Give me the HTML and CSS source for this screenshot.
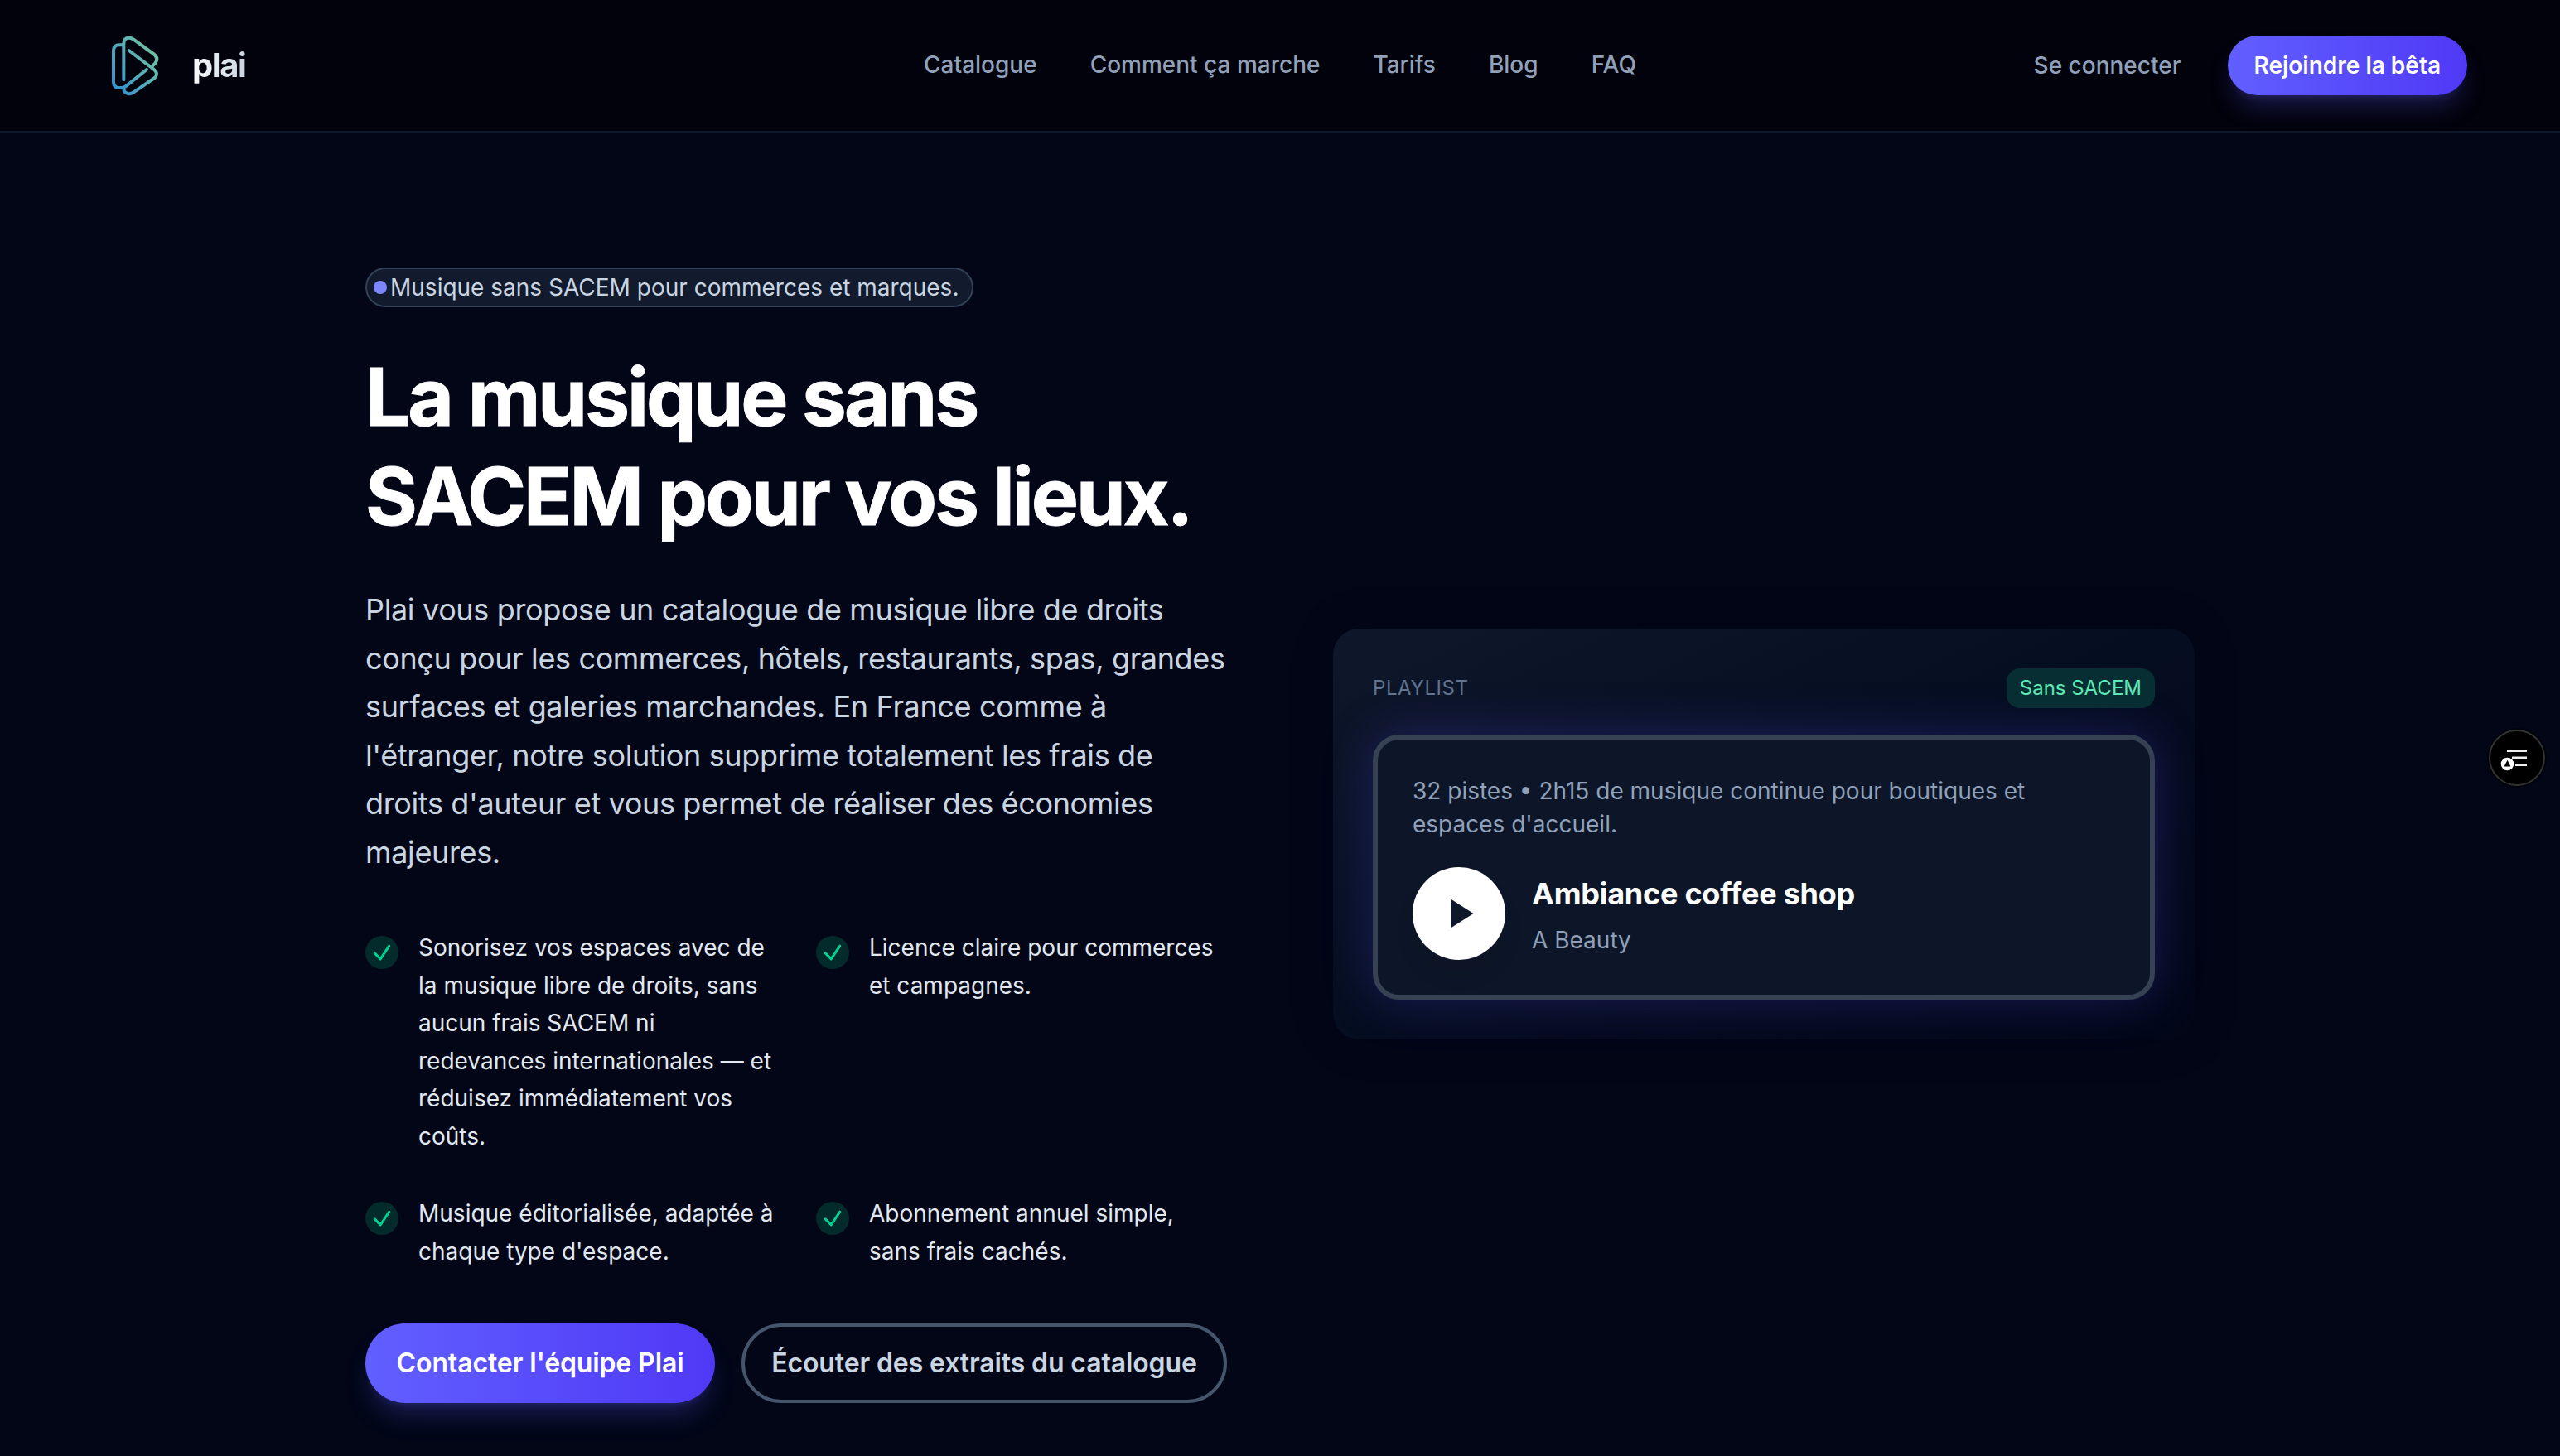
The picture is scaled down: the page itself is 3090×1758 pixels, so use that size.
FILE: index.html
```html
<!DOCTYPE html>
<html lang="fr">
<head>
  <meta charset="UTF-8">
  <meta name="viewport" content="width=device-width, initial-scale=1.0">
  <title>plai</title>
  <link rel="stylesheet" href="styles.css">
</head>
<body>
  <header class="header">
    <a class="brand" href="#">
      <svg class="brand-logo" viewBox="0 4 240 240" fill="none" stroke="url(#logoGradient)" stroke-width="12" stroke-linecap="round" stroke-linejoin="round">
        <defs>
          <linearGradient id="logoGradient" gradientUnits="userSpaceOnUse" x1="70" y1="200" x2="225" y2="90">
            <stop offset="0" stop-color="#3291d0"/>
            <stop offset="1" stop-color="#6cc0a6"/>
          </linearGradient>
        </defs>
        <path d="M110 50H96Q75 50 75 70V184Q75 205 96 205H104Q112 205 119 200L195 139"/>
        <path d="M112 176V46Q112 24 131 24Q140 24 148 30L221 83Q240 98 226 116L214 128"/>
        <path d="M131 70L222 139Q239 154 224 169L148 221Q138 228 127 226Q112 222 112 208"/>
      </svg>
      <span class="brand-name">plai</span>
    </a>
    <nav class="nav">
      <a href="#">Catalogue</a>
      <a href="#">Comment ça marche</a>
      <a href="#">Tarifs</a>
      <a href="#">Blog</a>
      <a href="#">FAQ</a>
    </nav>
    <div class="header-actions">
      <a class="login" href="#">Se connecter</a>
      <a class="join-btn" href="#">Rejoindre la bêta</a>
    </div>
  </header>

  <main class="hero">
    <section class="intro">
      <div class="badge"><span class="badge-dot"></span>Musique sans SACEM pour commerces et marques.</div>
      <h1>La musique sans SACEM pour vos lieux.</h1>
      <p class="lead">Plai vous propose un catalogue de musique libre de droits conçu pour les commerces, hôtels, restaurants, spas, grandes surfaces et galeries marchandes. En France comme à l'étranger, notre solution supprime totalement les frais de droits d'auteur et vous permet de réaliser des économies majeures.</p>
      <ul class="features">
        <li>
          <span class="check"><svg viewBox="0 0 24 24"><path d="M4.5 12.75l6 6 9-13.5"/></svg></span>
          <span>Sonorisez vos espaces avec de la musique libre de droits, sans aucun frais SACEM ni redevances internationales — et réduisez immédiatement vos coûts.</span>
        </li>
        <li>
          <span class="check"><svg viewBox="0 0 24 24"><path d="M4.5 12.75l6 6 9-13.5"/></svg></span>
          <span>Licence claire pour commerces et campagnes.</span>
        </li>
        <li>
          <span class="check"><svg viewBox="0 0 24 24"><path d="M4.5 12.75l6 6 9-13.5"/></svg></span>
          <span>Musique éditorialisée, adaptée à chaque type d'espace.</span>
        </li>
        <li>
          <span class="check"><svg viewBox="0 0 24 24"><path d="M4.5 12.75l6 6 9-13.5"/></svg></span>
          <span>Abonnement annuel simple, sans frais cachés.</span>
        </li>
      </ul>
      <div class="cta">
        <a class="btn btn-primary" href="#">Contacter l'équipe Plai</a>
        <a class="btn btn-outline" href="#">Écouter des extraits du catalogue</a>
      </div>
    </section>

    <section class="playlist">
      <div class="playlist-head">
        <span class="playlist-label">Playlist</span>
        <span class="tag">Sans SACEM</span>
      </div>
      <div class="player">
        <p class="player-info">32 pistes • 2h15 de musique continue pour boutiques et espaces d'accueil.</p>
        <div class="track">
          <button class="play-btn" aria-label="Lecture">
            <svg viewBox="0 0 24 24"><path d="M8 5v14l11-7z"/></svg>
          </button>
          <div>
            <h2>Ambiance coffee shop</h2>
            <p class="artist">A Beauty</p>
          </div>
        </div>
      </div>
    </section>
  </main>

  <button class="side-btn" aria-label="Menu">
    <svg viewBox="0 0 68 68">
      <path class="side-lines" d="M22 25.5H46M28 34H46M32 42.5H46"/>
      <circle cx="22.5" cy="41.5" r="7.8" fill="#fff"/>
      <path d="M22.5 36.8L26.4 44.6H18.6Z" fill="#000"/>
    </svg>
  </button>
</body>
</html>
```
FILE: styles.css
```css
* {
  box-sizing: border-box;
  -webkit-font-smoothing: antialiased;
}

body {
  margin: 0;
  height: 1758px;
  overflow: hidden;
  font-family: Inter, "Liberation Sans", sans-serif;
  font-size: 28px;
  line-height: 40px;
  background: #020617;
  color: #e2e8f0;
}

a {
  color: inherit;
  text-decoration: none;
}

h1, h2, p, ul {
  margin: 0;
  padding: 0;
}

/* Header */
.header {
  display: grid;
  grid-template-columns: 1fr auto 1fr;
  align-items: center;
  height: 160px;
  padding: 0 112px;
  background: #02020c;
  border-bottom: 2px solid #0f172a;
}

.brand {
  display: flex;
  align-items: center;
  gap: 40px;
}

.brand-logo {
  width: 80px;
  height: 80px;
}

.brand-name {
  font-size: 40px;
  line-height: 56px;
  font-weight: 700;
  letter-spacing: -1.4px;
  background: linear-gradient(90deg, #f8fafc, #cad5e2);
  -webkit-background-clip: text;
  background-clip: text;
  color: transparent;
}

.nav {
  display: flex;
  gap: 64px;
  padding-bottom: 2px;
  font-weight: 500;
  color: #90a1b9;
}

.header-actions {
  display: flex;
  align-items: center;
  justify-content: flex-end;
  gap: 56px;
}

.login {
  font-weight: 500;
  color: #90a1b9;
}

.join-btn {
  padding: 16px 32px;
  border-radius: 36px;
  font-weight: 600;
  color: #fff;
  background: linear-gradient(90deg, #615fff, #4f39f6);
  box-shadow: 0 20px 30px -6px rgba(97, 95, 255, 0.25), 0 8px 12px -8px rgba(97, 95, 255, 0.25);
}

/* Hero */
.hero {
  display: grid;
  grid-template-columns: repeat(2, minmax(0, 1fr));
  align-items: center;
  gap: 128px;
  width: 2208px;
  margin: 163px auto 0;
}

.badge {
  display: inline-flex;
  align-items: center;
  gap: 4px;
  height: 48px;
  padding: 0 16px 0 8px;
  border: 2px solid #314158;
  border-radius: 24px;
  background: #111b2d;
  color: #cad5e2;
  vertical-align: top;
}

.badge-dot {
  width: 16px;
  height: 16px;
  border-radius: 50%;
  background: #7c86ff;
}

h1 {
  margin-top: 48px;
  font-size: 96px;
  line-height: 120px;
  font-weight: 700;
  letter-spacing: -3px;
  color: #fff;
  -webkit-text-stroke: 1px #fff;
}

.lead {
  margin-top: 48px;
  font-size: 36px;
  line-height: 58.5px;
  letter-spacing: -0.36px;
  color: #cad5e2;
}

.features {
  display: grid;
  grid-template-columns: repeat(2, minmax(0, 1fr));
  gap: 48px;
  margin-top: 64px;
  list-style: none;
  line-height: 45.5px;
}

.features li {
  display: flex;
  align-items: flex-start;
  gap: 24px;
}

.check {
  display: flex;
  flex-shrink: 0;
  align-items: center;
  justify-content: center;
  width: 40px;
  height: 40px;
  margin-top: 8px;
  border-radius: 50%;
  background: #032b2b;
}

.check svg {
  width: 28px;
  height: 28px;
  fill: none;
  stroke: #00d492;
  stroke-width: 2.5;
  stroke-linecap: round;
  stroke-linejoin: round;
}

.cta {
  display: flex;
  gap: 32px;
  margin-top: 64px;
}

.btn {
  display: flex;
  align-items: center;
  justify-content: center;
  height: 96px;
  border-radius: 48px;
  font-size: 32px;
  font-weight: 600;
  letter-spacing: -0.12px;
  white-space: nowrap;
}

.btn-primary {
  width: 422px;
  color: #fff;
  background: linear-gradient(90deg, #615fff, #4f39f6);
  box-shadow: 0 20px 30px -6px rgba(97, 95, 255, 0.25), 0 8px 12px -8px rgba(97, 95, 255, 0.25);
}

.btn-outline {
  flex: 1;
  border: 4px solid #45556c;
  color: #cad5e2;
}

/* Playlist card */
.playlist {
  margin-bottom: 3px;
  padding: 48px;
  border-radius: 32px;
  background: linear-gradient(to bottom right, #0f172a, #050d20 50%, #020617);
  box-shadow: 0 0 60px rgba(0, 0, 0, 0.12);
}

.playlist-head {
  display: flex;
  align-items: center;
  justify-content: space-between;
  margin-bottom: 32px;
  font-size: 24px;
  line-height: 32px;
}

.playlist-label {
  letter-spacing: 0.6px;
  text-transform: uppercase;
  color: #62748e;
}

.tag {
  padding: 8px 16px;
  border-radius: 16px;
  background: #072f33;
  color: #5ee9b5;
}

.player {
  padding: 42px;
  border: 6px solid #364153;
  border-radius: 32px;
  background: #0d1628;
  box-shadow: 0 0 60px rgba(88, 76, 250, 0.26);
}

.player-info,
.artist {
  color: #90a1b9;
}

.track {
  display: flex;
  align-items: center;
  gap: 32px;
  margin-top: 32px;
}

.play-btn {
  display: flex;
  align-items: center;
  justify-content: center;
  width: 112px;
  height: 112px;
  padding: 0;
  border: none;
  border-radius: 50%;
  background: #fff;
  box-shadow: 0 20px 30px -6px rgba(0, 0, 0, 0.1);
}

.play-btn svg {
  width: 60px;
  height: 60px;
  fill: #0f172b;
}

h2 {
  font-size: 36px;
  line-height: 56px;
  font-weight: 700;
  letter-spacing: -0.25px;
  color: #fff;
}

.artist {
  margin-top: 8px;
}

/* Floating side button */
.side-btn {
  position: fixed;
  top: 881px;
  right: 18px;
  width: 68px;
  height: 68px;
  padding: 0;
  border: 2px solid #333;
  border-radius: 50%;
  background: #000;
  box-shadow: 0 0 0 2px rgba(0, 0, 0, 0.6);
}

.side-btn svg {
  display: block;
  width: 68px;
  height: 68px;
  margin: -2px;
}

.side-lines {
  fill: none;
  stroke: #eee;
  stroke-width: 3;
}
```
